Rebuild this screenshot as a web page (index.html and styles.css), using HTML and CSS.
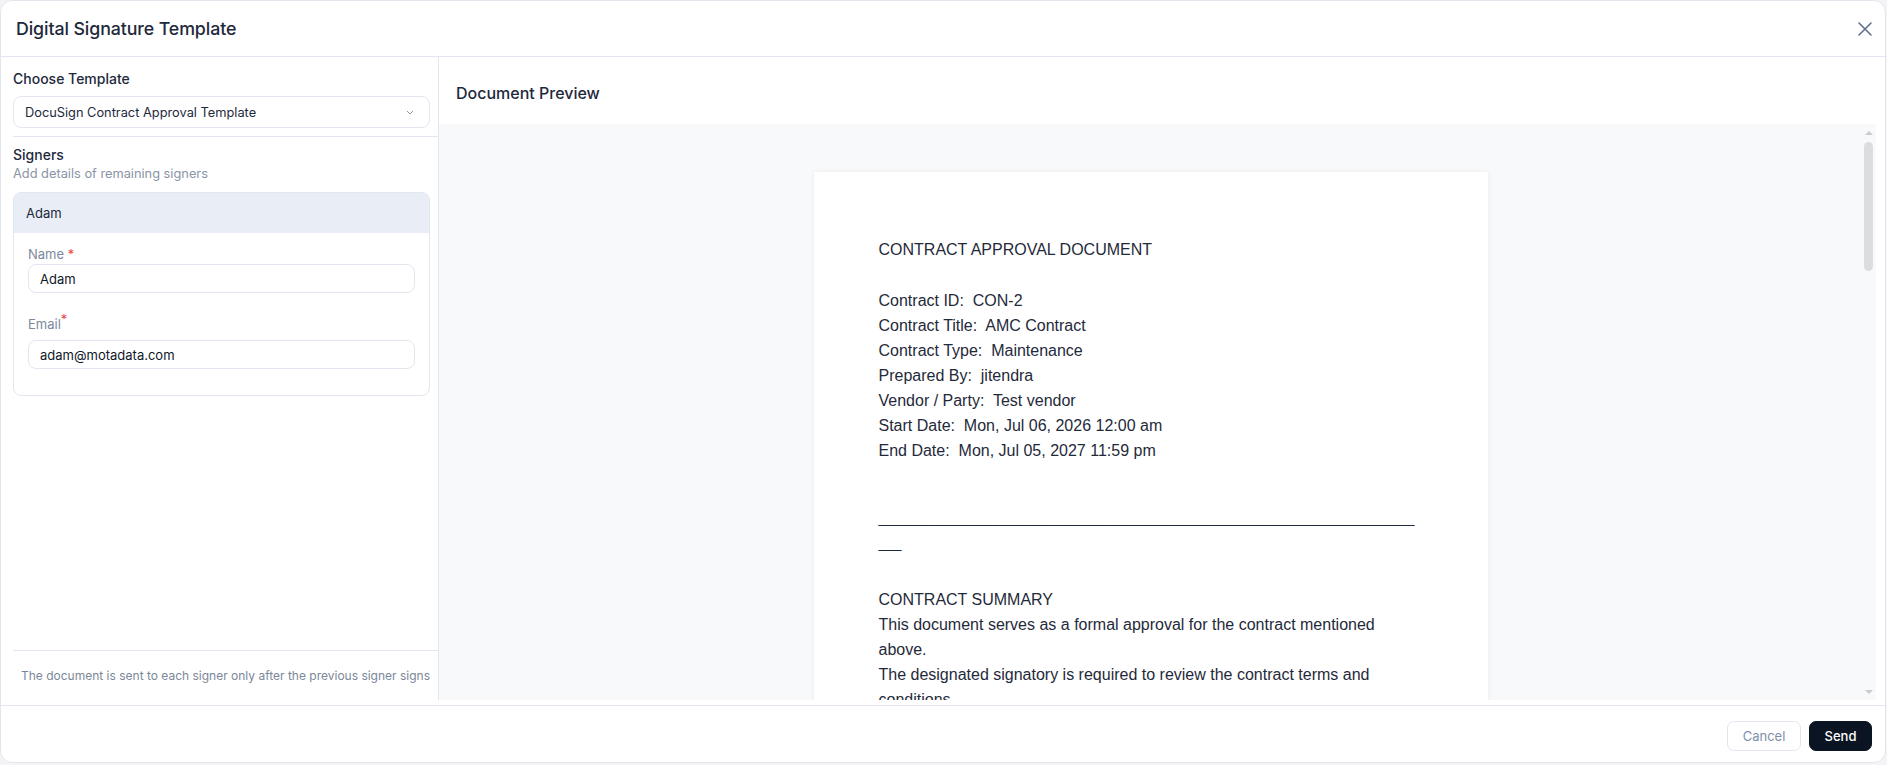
FILE: index.html
```html
<!DOCTYPE html>
<html lang="en">
<head>
<meta charset="utf-8">
<title>Digital Signature Template</title>
<link rel="stylesheet" href="styles.css">
</head>
<body>
<div class="modal">
  <div class="modal-header">
    <h1 class="modal-title">Digital Signature Template</h1>
    <button class="close-btn" aria-label="Close">
      <svg width="14" height="14" viewBox="0 0 14 14"><path d="M1 1L13 13M13 1L1 13" stroke="#5b6b8a" stroke-width="1.5" fill="none" stroke-linecap="round"/></svg>
    </button>
  </div>
  <div class="modal-body">
    <aside class="side">
      <div class="section template-section">
        <div class="section-title">Choose Template</div>
        <div class="select">
          <span>DocuSign Contract Approval Template</span>
          <svg class="chev" width="8" height="5" viewBox="0 0 8 5"><path d="M1 1L4 4L7 1" stroke="#8b95a7" stroke-width="1" fill="none"/></svg>
        </div>
      </div>
      <div class="section signers-section">
        <div class="section-title">Signers</div>
        <div class="section-sub">Add details of remaining signers</div>
        <div class="signer-card">
          <div class="signer-head">Adam</div>
          <div class="signer-body">
            <label class="field-label">Name <span class="req">*</span></label>
            <div class="input">Adam</div>
            <label class="field-label email-label">Email<sup class="req">*</sup></label>
            <div class="input">adam@motadata.com</div>
          </div>
        </div>
      </div>
      <div class="spacer"></div>
      <div class="side-note">The document is sent to each signer only after the previous signer signs</div>
    </aside>
    <main class="preview">
      <div class="preview-title">Document Preview</div>
      <div class="preview-area">
        <div class="doc-scroll">
          <div class="doc-page">
            <div class="doc-line doc-heading">CONTRACT APPROVAL DOCUMENT</div>
            <div class="doc-line">Contract ID:&nbsp; CON-2</div>
            <div class="doc-line">Contract Title:&nbsp; AMC Contract</div>
            <div class="doc-line">Contract Type:&nbsp; Maintenance</div>
            <div class="doc-line">Prepared By:&nbsp; jitendra</div>
            <div class="doc-line">Vendor / Party:&nbsp; Test vendor</div>
            <div class="doc-line">Start Date:&nbsp; Mon, Jul 06, 2026 12:00 am</div>
            <div class="doc-line">End Date:&nbsp; Mon, Jul 05, 2027 11:59 pm</div>
            <div class="doc-rule">_________________________________________________</div>
            <div class="doc-line">CONTRACT SUMMARY</div>
            <div class="doc-line">This document serves as a formal approval for the contract mentioned above.</div>
            <div class="doc-line">The designated signatory is required to review the contract terms and conditions.</div>
            <div class="doc-line">Upon signing, the contract will be considered approved and effective.</div>
          </div>
        </div>
        <div class="scrollbar">
          <div class="sb-btn"><span class="tri-up"></span></div>
          <div class="sb-track"><div class="sb-thumb"></div></div>
          <div class="sb-btn"><span class="tri-down"></span></div>
        </div>
      </div>
    </main>
  </div>
  <div class="modal-footer">
    <button class="btn btn-cancel">Cancel</button>
    <button class="btn btn-send">Send</button>
  </div>
</div>
</body>
</html>
```

FILE: styles.css
```css
* { box-sizing: border-box; }
html, body { margin: 0; padding: 0; }
body {
  background: #f3f4f6;
  font-family: Inter, "Noto Sans", sans-serif;
  color: #1e293b;
  width: 1887px;
  height: 765px;
  overflow: hidden;
}
.modal {
  width: 1886px;
  height: 763px;
  background: #fff;
  border: 1px solid #e3e6ed;
  border-radius: 12px;
  display: flex;
  flex-direction: column;
  overflow: hidden;
}
.modal-header {
  height: 56px;
  flex: none;
  border-bottom: 1px solid #e2e6f0;
  display: flex;
  align-items: center;
  justify-content: space-between;
  padding: 0 13px 0 15px;
}
.modal-title {
  margin: 0;
  font-size: 17.8px;
  font-weight: 500;
  color: #1e293b;
  letter-spacing: -0.1px;
}
.close-btn {
  background: none;
  border: 0;
  padding: 0;
  width: 14px;
  height: 14px;
  display: flex;
  cursor: pointer;
}
.modal-body {
  height: 643px;
  flex: none;
  display: flex;
}
.side {
  width: 438px;
  flex: none;
  border-right: 1px solid #e2e6f0;
  display: flex;
  flex-direction: column;
}
.section { margin-left: 12px; padding-right: 8px; }
.template-section {
  padding-top: 12px;
  padding-bottom: 8px;
  border-bottom: 1px solid #e2e6f0;
}
.section-title {
  font-size: 14px;
  line-height: 20px;
  font-weight: 450;
  color: #1e293b;
}
.select {
  margin-top: 7px;
  height: 32px;
  border: 1px solid #e2e6ee;
  border-radius: 8px;
  display: flex;
  align-items: center;
  justify-content: space-between;
  padding: 0 15px 0 11px;
  font-size: 12.8px;
  color: #1e293b;
}
.signers-section { padding-top: 8px; }
.section-sub {
  font-size: 12.8px;
  line-height: 18px;
  color: #8a94a6;
}
.signer-card {
  margin-top: 9px;
  border: 1px solid #e2e6ee;
  border-radius: 8px;
  overflow: hidden;
}
.signer-head {
  height: 40px;
  background: #e9edf5;
  display: flex;
  align-items: center;
  padding-left: 12px;
  font-size: 13px;
  color: #1e293b;
}
.signer-body {
  padding: 12px 14px 26px;
  display: flex;
  flex-direction: column;
}
.field-label {
  font-size: 13px;
  line-height: 18px;
  color: #7d889c;
  margin-bottom: 1px;
}
.email-label { margin-top: 22px; margin-bottom: 7px; }
.req { color: #ef4444; }
sup.req { font-size: 13px; line-height: 0; vertical-align: 5px; }
.input {
  height: 29px;
  border: 1px solid #e2e6ee;
  border-radius: 8px;
  display: flex;
  align-items: center;
  padding-left: 11px;
  font-size: 13px;
  color: #111827;
}
.spacer { flex: 1; }
.side-note {
  margin-left: 12px;
  height: 50px;
  border-top: 1px solid #e2e6f0;
  display: flex;
  align-items: center;
  justify-content: center;
  font-size: 12px;
  color: #7b8799;
}
.preview {
  flex: 1;
  display: flex;
  flex-direction: column;
  padding-right: 9px;
  min-width: 0;
}
.preview-title {
  height: 67px;
  flex: none;
  padding: 25px 0 0 17px;
  font-size: 16px;
  line-height: 22px;
  font-weight: 450;
  color: #1e293b;
}
.preview-area {
  flex: 1;
  background: #f8f9fb;
  display: flex;
  min-height: 0;
}
.doc-scroll {
  flex: 1;
  overflow: hidden;
  display: flex;
  justify-content: center;
  padding-top: 48px;
}
.doc-page {
  width: 674px;
  flex: none;
  background: #fff;
  box-shadow: 0 0 6px rgba(15, 23, 42, 0.06);
  padding: 65px 65px 40px;
  font-family: "Liberation Sans", Arial, sans-serif;
  font-size: 16px;
  line-height: 25px;
  color: #1f2a3a;
  height: 900px;
}
.doc-heading { margin-bottom: 25.5px; }
.doc-rule {
  font-size: 20.5px;
  font-weight: bold;
  line-height: 25px;
  overflow-wrap: anywhere;
  word-break: break-all;
  margin-top: 40.5px;
  margin-bottom: 34px;
  letter-spacing: 0;
}
.scrollbar {
  width: 14px;
  flex: none;
  display: flex;
  flex-direction: column;
}
.sb-btn {
  height: 17px;
  display: flex;
  align-items: center;
  justify-content: center;
}
.tri-up, .tri-down {
  width: 0;
  height: 0;
  border-left: 4px solid transparent;
  border-right: 4px solid transparent;
}
.tri-up { border-bottom: 4px solid #c9cbd0; }
.tri-down { border-top: 4px solid #c9cbd0; }
.sb-track { flex: 1; padding: 1px 3px 0 2px; }
.sb-thumb {
  height: 129px;
  background: #dcdde0;
  border-radius: 5px;
}
.modal-footer {
  margin-top: 5px;
  flex: 1;
  border-top: 1px solid #e2e6f0;
  display: flex;
  justify-content: flex-end;
  align-items: flex-start;
  gap: 8px;
  padding: 15px 13px 0;
}
.btn {
  height: 30px;
  border-radius: 7px;
  font-family: Inter, "Noto Sans", sans-serif;
  font-size: 13px;
  cursor: pointer;
}
.btn-cancel {
  width: 74px;
  background: #fff;
  border: 1px solid #e2e6ee;
  color: #8090ab;
}
.btn-send {
  width: 63px;
  background: #0b1422;
  border: 1px solid #0b1422;
  color: #fff;
  font-weight: 500;
}
```
